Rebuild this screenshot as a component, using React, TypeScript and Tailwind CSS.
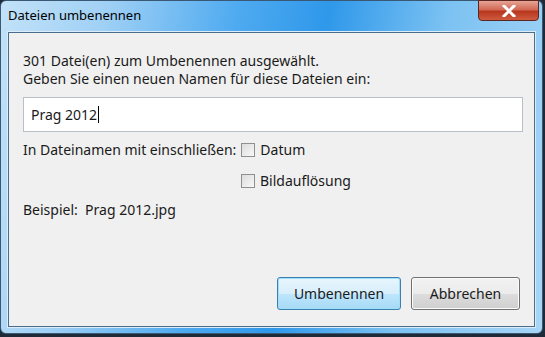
export default function App() {
  return (
    <div
      className="relative w-[545px] h-[337px] overflow-hidden bg-[#1e2a38]"
      style={{ fontFamily: '"Noto Sans", "Open Sans", sans-serif' }}
    >
      {/* window frame */}
      <div className="absolute left-0 top-0 w-[543px] h-[334px] rounded-[6px] border border-[#3a5873] bg-[linear-gradient(100deg,#c2e2f8_0%,#9fd0f5_18%,#4eaaf0_40%,#2f98ea_55%,#7cc2f2_75%,#a8d6f6_100%)]">
        {/* title bar */}
        <div className="flex h-[31px] items-start justify-between">
          <div className="pl-[7px] pt-[6px] text-[13px] leading-[17px] text-black">Dateien umbenennen</div>
          <div className="mr-[3px] mt-[-1px] flex h-[21px] w-[61px] items-center justify-center rounded-b-[4px] border border-[#5b2620] bg-[linear-gradient(180deg,#e6a496_0%,#d26a56_45%,#b7371f_55%,#cf5b3f_100%)]">
            <svg width="14" height="12" viewBox="0 0 14 12">
              <path d="M2 1 L12 11 M12 1 L2 11" stroke="#fff" strokeWidth="3" strokeLinecap="square" />
            </svg>
          </div>
        </div>
        {/* client area */}
        <div className="mx-[7px] h-[295px] border border-[#4a6d8c] bg-[#f0f0f0] shadow-[0_0_0_1px_#dcecf8]">
          <div className="flex flex-col px-[14px] pt-[19px] text-[14px] leading-[18px] text-[#1a1a1a]">
            <div>301 Datei(en) zum Umbenennen ausgewählt.</div>
            <div>Geben Sie einen neuen Namen für diese Dateien ein:</div>
            <div className="mt-[9px] flex h-[35px] w-[500px] items-center border border-[#b9bfc6] bg-white pl-[7px] text-[14px]">
              Prag 2012<span className="ml-[1px] inline-block h-[17px] w-[1px] bg-black" />
            </div>
            <div className="mt-[9px] flex items-center">
              <span>In Dateinamen mit einschließen:</span>
              <span className="ml-[5px] h-[14px] w-[14px] border border-[#8f8f8f] bg-[linear-gradient(135deg,#dcdcdc,#f8f8f8)]" />
              <span className="ml-[5px]">Datum</span>
            </div>
            <div className="mt-[13px] flex items-center pl-[218px]">
              <span className="h-[14px] w-[14px] border border-[#8f8f8f] bg-[linear-gradient(135deg,#dcdcdc,#f8f8f8)]" />
              <span className="ml-[5px]">Bildauflösung</span>
            </div>
            <div className="mt-[11px]">Beispiel:&nbsp; Prag 2012.jpg</div>
            <div className="mt-[58px] flex justify-end gap-[10px]">
              <button className="h-[33px] w-[124px] rounded-[3px] border border-[#3c7fb1] bg-[linear-gradient(180deg,#e8f6fd_0%,#d6eefb_50%,#bee6fd_51%,#a7d9f5_100%)] text-[14px] text-[#1a1a1a] shadow-[inset_0_0_0_1px_#9ee0f8]">
                Umbenennen
              </button>
              <button className="h-[33px] w-[109px] rounded-[3px] border border-[#707070] bg-[linear-gradient(180deg,#f2f2f2_0%,#ebebeb_50%,#dddddd_51%,#cfcfcf_100%)] text-[14px] text-[#1a1a1a] shadow-[inset_0_0_0_1px_#fcfcfc]">
                Abbrechen
              </button>
            </div>
          </div>
        </div>
      </div>
    </div>
  );
}
